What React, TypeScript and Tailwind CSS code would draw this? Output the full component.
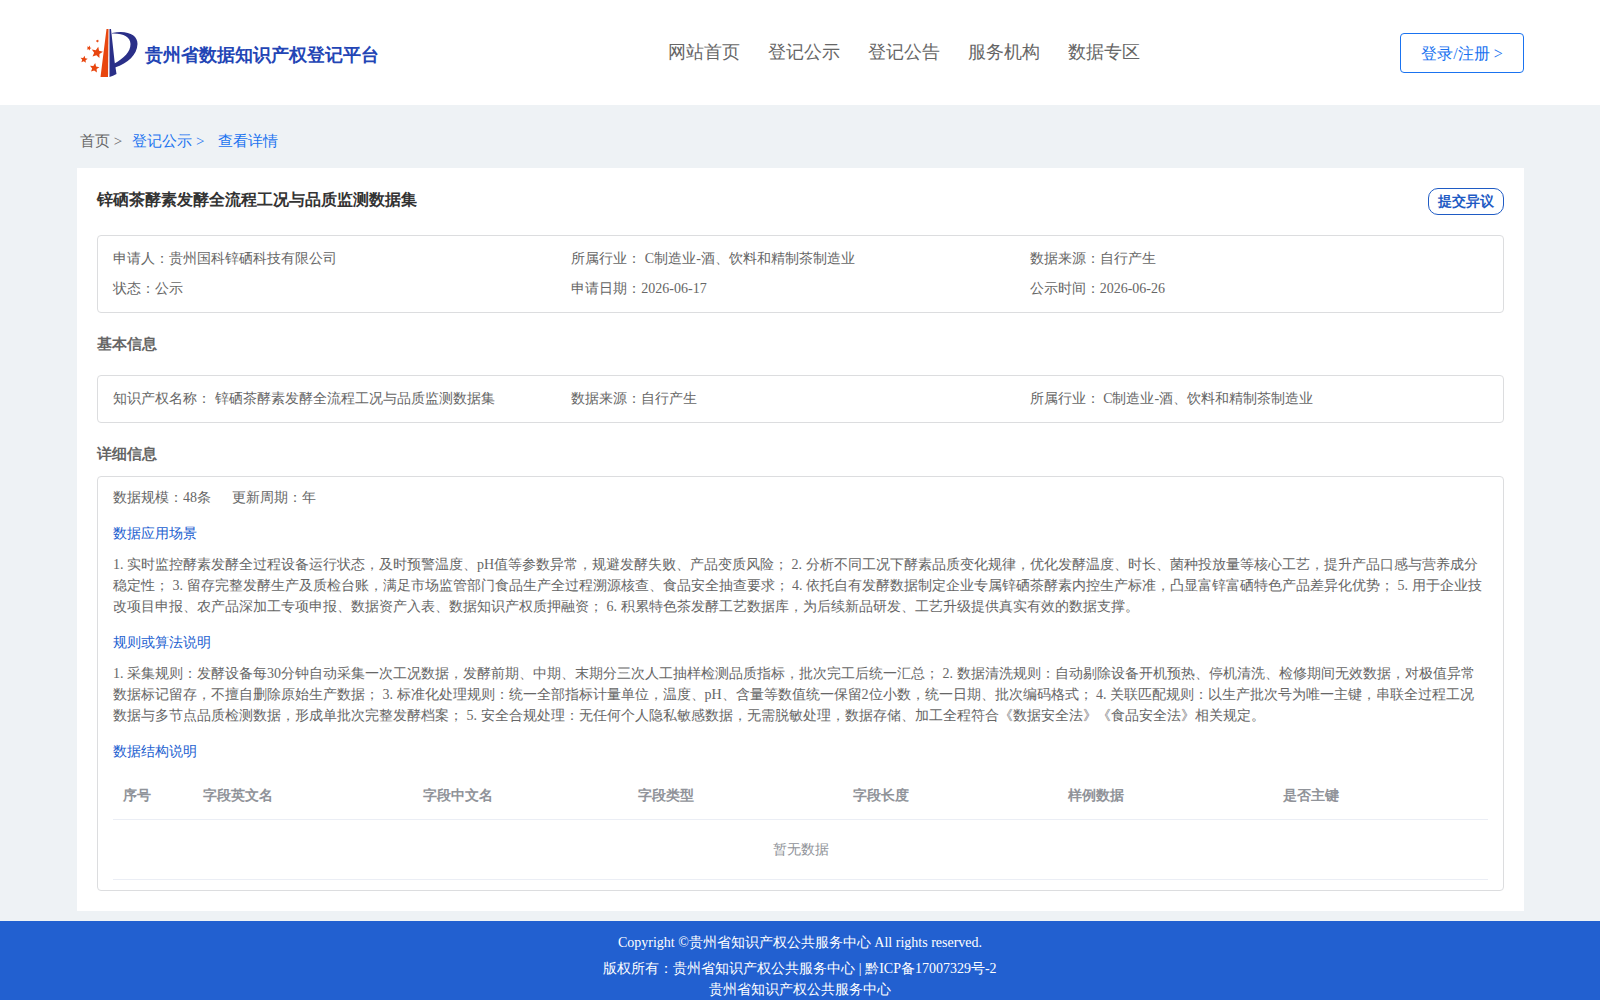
const NAV = ['网站首页', '登记公示', '登记公告', '服务机构', '数据专区'];

const COLUMNS = [
  { label: '序号', width: 'w-20' },
  { label: '字段英文名', width: 'w-[220px]' },
  { label: '字段中文名', width: '' },
  { label: '字段类型', width: '' },
  { label: '字段长度', width: '' },
  { label: '样例数据', width: '' },
  { label: '是否主键', width: '' },
];

const SUMMARY = [
  '申请人：贵州国科锌硒科技有限公司',
  '所属行业： C制造业-酒、饮料和精制茶制造业',
  '数据来源：自行产生',
  '状态：公示',
  '申请日期：2026-06-17',
  '公示时间：2026-06-26',
];

const BASIC = [
  '知识产权名称： 锌硒茶酵素发酵全流程工况与品质监测数据集',
  '数据来源：自行产生',
  '所属行业： C制造业-酒、饮料和精制茶制造业',
];

const SCENARIO =
  '1. 实时监控酵素发酵全过程设备运行状态，及时预警温度、pH值等参数异常，规避发酵失败、产品变质风险； 2. 分析不同工况下酵素品质变化规律，优化发酵温度、时长、菌种投放量等核心工艺，提升产品口感与营养成分稳定性； 3. 留存完整发酵生产及质检台账，满足市场监管部门食品生产全过程溯源核查、食品安全抽查要求； 4. 依托自有发酵数据制定企业专属锌硒茶酵素内控生产标准，凸显富锌富硒特色产品差异化优势； 5. 用于企业技改项目申报、农产品深加工专项申报、数据资产入表、数据知识产权质押融资； 6. 积累特色茶发酵工艺数据库，为后续新品研发、工艺升级提供真实有效的数据支撑。';

const RULES =
  '1. 采集规则：发酵设备每30分钟自动采集一次工况数据，发酵前期、中期、末期分三次人工抽样检测品质指标，批次完工后统一汇总； 2. 数据清洗规则：自动剔除设备开机预热、停机清洗、检修期间无效数据，对极值异常数据标记留存，不擅自删除原始生产数据； 3. 标准化处理规则：统一全部指标计量单位，温度、pH、含量等数值统一保留2位小数，统一日期、批次编码格式； 4. 关联匹配规则：以生产批次号为唯一主键，串联全过程工况数据与多节点品质检测数据，形成单批次完整发酵档案； 5. 安全合规处理：无任何个人隐私敏感数据，无需脱敏处理，数据存储、加工全程符合《数据安全法》《食品安全法》相关规定。';

const STAR = 'M0,-10 L2.8,-3.4 L9.5,-3.1 L4.5,1.5 L5.9,8.1 L0,4.8 L-5.9,8.1 L-4.5,1.5 L-9.5,-3.1 L-2.8,-3.4 Z';

function Logo() {
  return (
    <svg className="h-[50px] w-[58px] shrink-0" viewBox="0 0 58 50" aria-hidden="true">
      <path d="M26.500 1 L28.500 1 L28 49 L20.500 49 Z" fill="#e8460f" />
      <path d="M29.500 1 L31 1 L34.500 33 L36.500 46 Q33 48 29.500 49 Z" fill="#2a2f88" />
      <path d="M32 5 C47 1.500 58 7 57.500 16 C57 27 48 35 35 39.500 L34.500 35.500 C44 30 50.500 24 50.500 16 C50.500 9 43 5 32 5.500 Z" fill="#2a2f88" />
      <g fill="#e8460f">
        <path d={STAR} transform="translate(17 24.500) rotate(12) scale(.6)" />
        <path d={STAR} transform="translate(14.500 40) rotate(8) scale(.5)" />
        <path d={STAR} transform="translate(4 31.500) rotate(8) scale(.38)" />
        <path d={STAR} transform="translate(9 20) rotate(20) scale(.26)" />
        <path d={STAR} transform="translate(17.500 13) rotate(20) scale(.17)" />
      </g>
    </svg>
  );
}

function InfoGrid({ items }: { items: string[] }) {
  return (
    <div className="grid grid-cols-3 rounded border border-[#dcdddf] px-[15px] py-2 leading-[30px]">
      {items.map((item) => (
        <div key={item}>{item}</div>
      ))}
    </div>
  );
}

function Section({ title, text }: { title: string; text: string }) {
  return (
    <section className="mt-[15px]">
      <h3 className="text-[#2260d0]">{title}</h3>
      <p className="mt-2.5">{text}</p>
    </section>
  );
}

export default function App() {
  return (
    <div className="min-h-screen bg-[#eef2f5] font-['Liberation_Serif',serif] text-sm leading-[21px] text-[#666]">
      <header className="flex h-[105px] items-center bg-white pr-[76px] pl-20">
        <div className="flex flex-[23] items-center gap-[7px]">
          <Logo />
          <span className="pt-1 text-lg font-bold text-[#2345b5]">贵州省数据知识产权登记平台</span>
        </div>
        <nav className="flex gap-7 pb-0.5 text-lg">
          {NAV.map((n) => (
            <a key={n} href="#">{n}</a>
          ))}
        </nav>
        <div className="flex flex-[15] justify-end">
          <button type="button" className="h-10 w-[124px] rounded border border-[#1a73f0] pt-0.5 text-base text-[#1a73f0]">
            登录/注册 &gt;
          </button>
        </div>
      </header>

      <nav className="flex h-[63px] items-center pt-2.5 pl-20 text-[15px]">
        <a href="#">首页 &gt;</a>
        <a href="#" className="ml-2.5 text-[#1a73f0]">登记公示 &gt;</a>
        <a href="#" className="ml-3.5 text-[#1a73f0]">查看详情</a>
      </nav>

      <main className="mr-[76px] ml-[77px] bg-white p-5">
        <div className="mb-5 flex items-start justify-between">
          <h1 className="text-base leading-6 font-bold text-[#333]">锌硒茶酵素发酵全流程工况与品质监测数据集</h1>
          <button type="button" className="h-[27px] rounded-[10px] border border-[#1f5bc4] px-[9px] font-bold text-[#1f5bc4]">
            提交异议
          </button>
        </div>
        <InfoGrid items={SUMMARY} />
        <h2 className="py-5 text-[15px] leading-[22px] font-bold">基本信息</h2>
        <InfoGrid items={BASIC} />
        <h2 className="pt-5 pb-[11px] text-[15px] leading-[22px] font-bold">详细信息</h2>
        <div className="rounded border border-[#dcdddf] px-[15px] py-2.5">
          <div className="flex gap-[21px]">
            <span>数据规模：48条</span>
            <span>更新周期：年</span>
          </div>
          <Section title="数据应用场景" text={SCENARIO} />
          <Section title="规则或算法说明" text={RULES} />
          <section className="mt-[15px]">
            <h3 className="text-[#2260d0]">数据结构说明</h3>
            <table className="mt-2.5 w-full table-fixed border-separate border-spacing-0 text-[#909399]">
              <thead>
                <tr className="h-12">
                  {COLUMNS.map((c) => (
                    <th key={c.label} className={`border-b border-[#ebeef5] px-2.5 text-left font-bold ${c.width}`}>{c.label}</th>
                  ))}
                </tr>
              </thead>
              <tbody>
                <tr className="h-[60px]">
                  <td colSpan={7} className="border-b border-[#ebeef5] text-center">暂无数据</td>
                </tr>
              </tbody>
            </table>
          </section>
        </div>
      </main>

      <footer className="mt-2.5 bg-[#2260d0] pt-[11px] text-center text-white">
        <p className="mb-[5px]">Copyright ©贵州省知识产权公共服务中心 All rights reserved.</p>
        <p>版权所有：贵州省知识产权公共服务中心 | <a href="#">黔ICP备17007329号-2</a></p>
        <p>贵州省知识产权公共服务中心</p>
      </footer>
    </div>
  );
}
